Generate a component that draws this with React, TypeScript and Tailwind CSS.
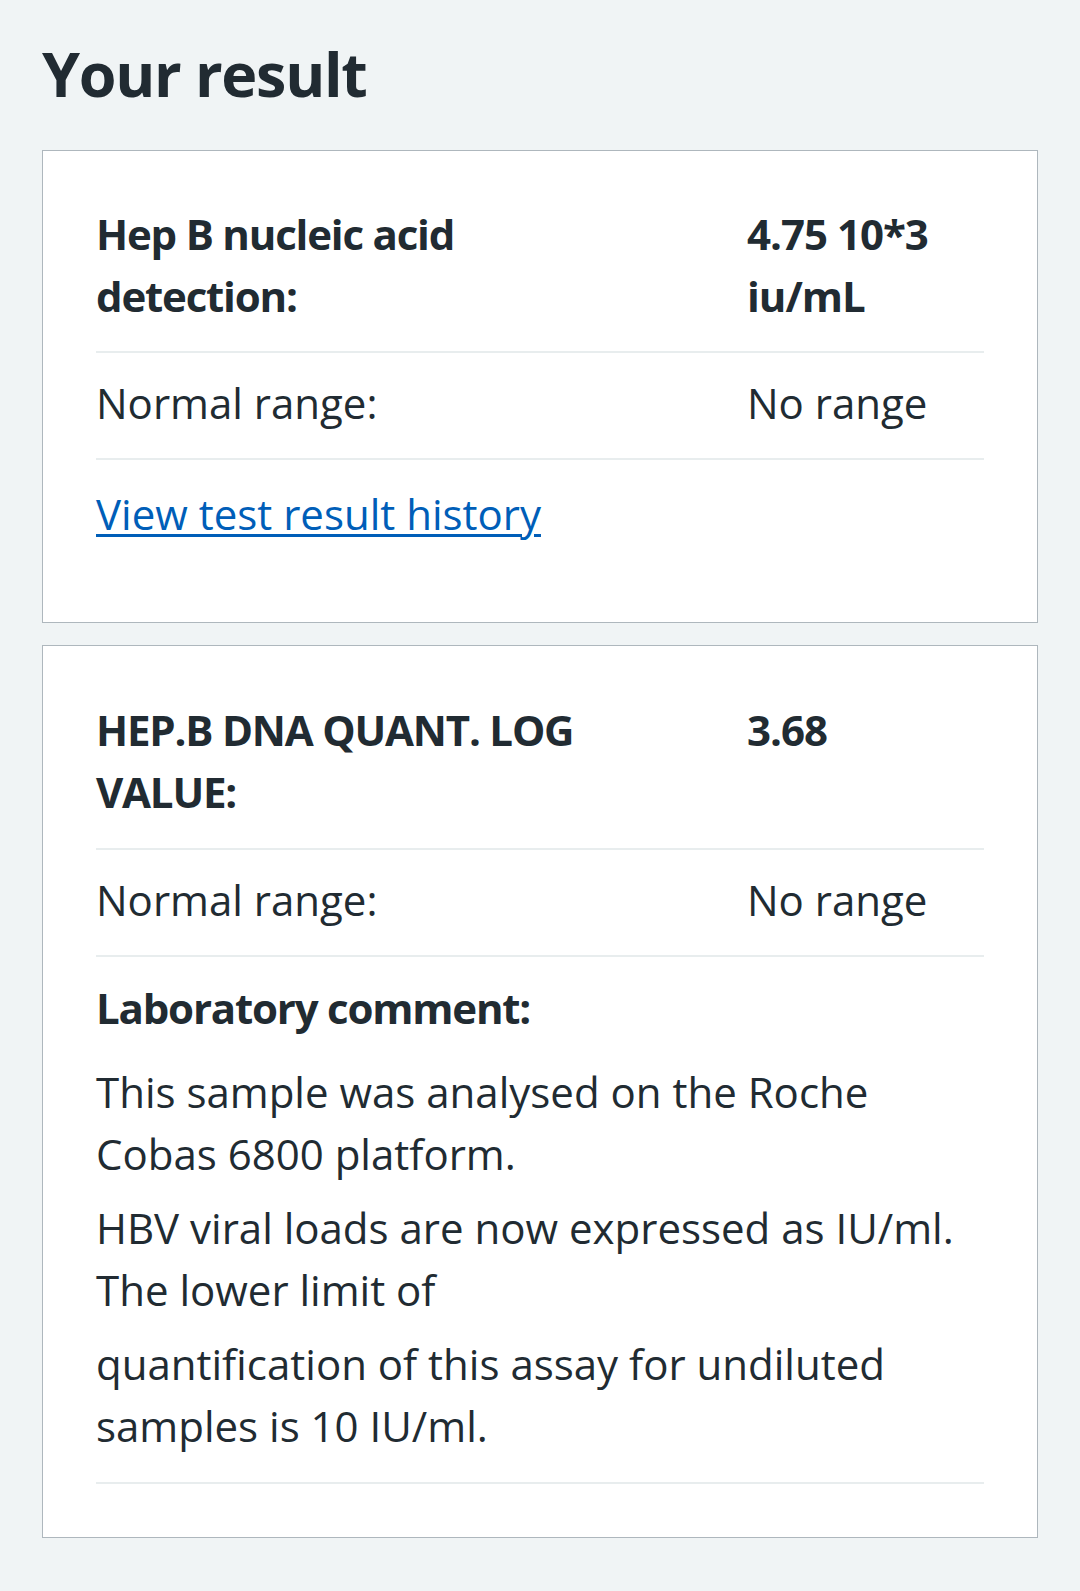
import React from 'react';

// ─── Result card pieces ───────────────────────────────────────────────────────

function Row({
  label,
  value,
  bold,
  className = '',
}: {
  label: string;
  value: string;
  bold?: boolean;
  className?: string;
}) {
  return (
    <div
      className={`grid grid-cols-[1fr_237px] gap-x-[100px] border-b-2 border-[#e8edee] ${className}`}
    >
      <p className={bold ? 'font-bold tracking-[-1.2px]' : ''}>{label}</p>
      <p className={bold ? 'font-bold tracking-[-1px]' : ''}>{value}</p>
    </div>
  );
}

function Card({ children, className = '' }: { children: React.ReactNode; className?: string }) {
  return (
    <section className={`border border-[#aeb7bd] bg-white px-[53px] ${className}`}>
      {children}
    </section>
  );
}

// ─── Page ─────────────────────────────────────────────────────────────────────

export default function App() {
  return (
    <div className="min-h-screen bg-[#f0f4f5] px-[42px] pt-[36px] pb-[54px] font-['Open_Sans','Noto_Sans',sans-serif] text-[42px] leading-[62px] text-[#212b32]">
      <h1 className="mb-[38px] text-[61px] font-bold leading-[76px] tracking-[-1.3px]">
        Your result
      </h1>

      <div className="flex flex-col gap-[22px]">
        <Card className="pt-[52px] pb-[77px]">
          <Row bold label="Hep B nucleic acid detection:" value="4.75 10*3 iu/mL" className="pb-[24px]" />
          <Row label="Normal range:" value="No range" className="pt-[19px] pb-[24px]" />
          <p className="pt-[23px]">
            <a
              href="#"
              className="text-[#005eb8] underline decoration-[3px] underline-offset-[4px]"
            >
              View test result history
            </a>
          </p>
        </Card>

        <Card className="pt-[53px] pb-[53px]">
          <Row bold label="HEP.B DNA QUANT. LOG VALUE:" value="3.68" className="pb-[25px]" />
          <Row label="Normal range:" value="No range" className="pt-[19px] pb-[24px]" />
          <div className="border-b-2 border-[#e8edee] pt-[20px] pb-[25px]">
            <p className="font-bold tracking-[-1.2px]">Laboratory comment:</p>
            <p className="mt-[22px]">This sample was analysed on the Roche Cobas 6800 platform.</p>
            <p className="mt-[12px]">
              HBV viral loads are now expressed as IU/ml. The lower limit of
            </p>
            <p className="mt-[12px]">
              quantification of this assay for undiluted samples is 10 IU/ml.
            </p>
          </div>
        </Card>
      </div>
    </div>
  );
}
